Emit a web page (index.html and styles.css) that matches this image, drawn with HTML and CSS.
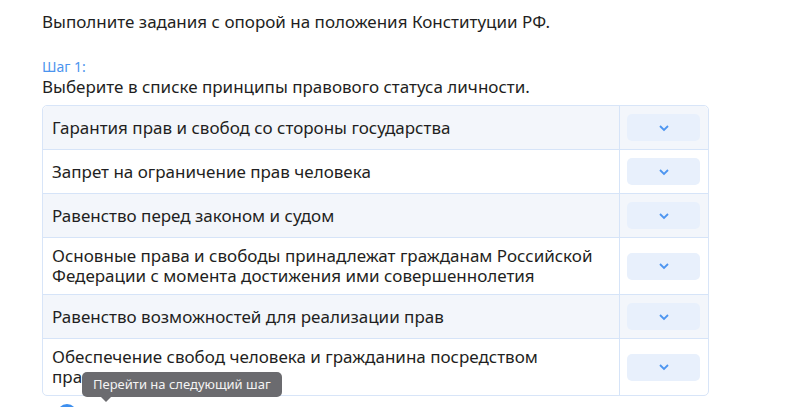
FILE: index.html
```html
<!DOCTYPE html>
<html lang="ru">
<head>
<meta charset="utf-8">
<link rel="stylesheet" href="styles.css">
</head>
<body>
<div class="page">
  <h1 class="title">Выполните задания с опорой на положения Конституции РФ.</h1>
  <div class="step-label">Шаг 1:</div>
  <div class="step-text">Выберите в списке принципы правового статуса личности.</div>
  <div class="table">
    <div class="row shaded"><div class="cell-text">Гарантия прав и свобод со стороны государства</div><div class="cell-select"><button class="select"><svg width="12" height="8" viewBox="0 0 12 8"><path d="M2 2l4 4 4-4" fill="none" stroke="#4d95f0" stroke-width="1.8"/></svg></button></div></div>
    <div class="row"><div class="cell-text">Запрет на ограничение прав человека</div><div class="cell-select"><button class="select"><svg width="12" height="8" viewBox="0 0 12 8"><path d="M2 2l4 4 4-4" fill="none" stroke="#4d95f0" stroke-width="1.8"/></svg></button></div></div>
    <div class="row shaded"><div class="cell-text">Равенство перед законом и судом</div><div class="cell-select"><button class="select"><svg width="12" height="8" viewBox="0 0 12 8"><path d="M2 2l4 4 4-4" fill="none" stroke="#4d95f0" stroke-width="1.8"/></svg></button></div></div>
    <div class="row"><div class="cell-text">Основные права и свободы принадлежат гражданам Российской Федерации с момента достижения ими совершеннолетия</div><div class="cell-select"><button class="select"><svg width="12" height="8" viewBox="0 0 12 8"><path d="M2 2l4 4 4-4" fill="none" stroke="#4d95f0" stroke-width="1.8"/></svg></button></div></div>
    <div class="row shaded"><div class="cell-text">Равенство возможностей для реализации прав</div><div class="cell-select"><button class="select"><svg width="12" height="8" viewBox="0 0 12 8"><path d="M2 2l4 4 4-4" fill="none" stroke="#4d95f0" stroke-width="1.8"/></svg></button></div></div>
    <div class="row last"><div class="cell-text">Обеспечение свобод человека и гражданина посредством правосудия</div><div class="cell-select"><button class="select"><svg width="12" height="8" viewBox="0 0 12 8"><path d="M2 2l4 4 4-4" fill="none" stroke="#4d95f0" stroke-width="1.8"/></svg></button></div></div>
    <div class="tooltip">Перейти на следующий шаг</div>
  </div>
  <div class="next-dot"></div>
</div>
</body>
</html>
```
FILE: styles.css
```css
html, body {
  margin: 0;
  padding: 0;
  background: #ffffff;
  overflow: hidden;
}
body {
  font-family: "Noto Sans", "Liberation Sans", sans-serif;
  color: #1f1f22;
  width: 800px;
  height: 407px;
}
.page {
  padding: 9px 0 0 42px;
}
.title {
  margin: 0;
  font-size: 17px;
  font-weight: 400;
  line-height: 26px;
}
.step-label {
  margin-top: 23px;
  font-size: 14px;
  line-height: 18px;
  color: #4b94ee;
}
.step-text {
  font-size: 17px;
  line-height: 22px;
  margin-bottom: 7px;
}
.table {
  position: relative;
  width: 667px;
  border: 1px solid #d8e5f8;
  border-radius: 5px;
  box-sizing: border-box;
}
.row {
  display: flex;
  border-bottom: 1px solid #d6e4f8;
}
.row.last {
  border-bottom: none;
}
.row.shaded {
  background: #f3f6fb;
}
.row:first-child {
  border-radius: 5px 5px 0 0;
}
.cell-text {
  flex: 1;
  padding: 8px 9px;
  font-size: 17px;
  line-height: 20px;
  display: flex;
  align-items: center;
  border-right: 1px solid #d6e4f8;
}
.cell-select {
  width: 88px;
  padding: 8px 7px;
  box-sizing: border-box;
  display: flex;
  align-items: center;
}
.select {
  width: 73px;
  height: 27px;
  border: none;
  border-radius: 5px;
  background: #e8f0fc;
  display: flex;
  align-items: center;
  justify-content: center;
  padding: 0;
}
.tooltip {
  position: absolute;
  left: 39px;
  top: 266px;
  background: #6b6b6f;
  color: #f4f4f4;
  font-size: 13px;
  line-height: 25px;
  padding: 0 11px;
  border-radius: 5px;
  white-space: nowrap;
}
.tooltip::after {
  content: "";
  position: absolute;
  left: 19px;
  bottom: -5px;
  border-left: 5px solid transparent;
  border-right: 5px solid transparent;
  border-top: 5px solid #6b6b6f;
}
.next-dot {
  margin: 8px 0 0 15px;
  width: 20px;
  height: 20px;
  border-radius: 50%;
  background: #3d8fef;
}
```
